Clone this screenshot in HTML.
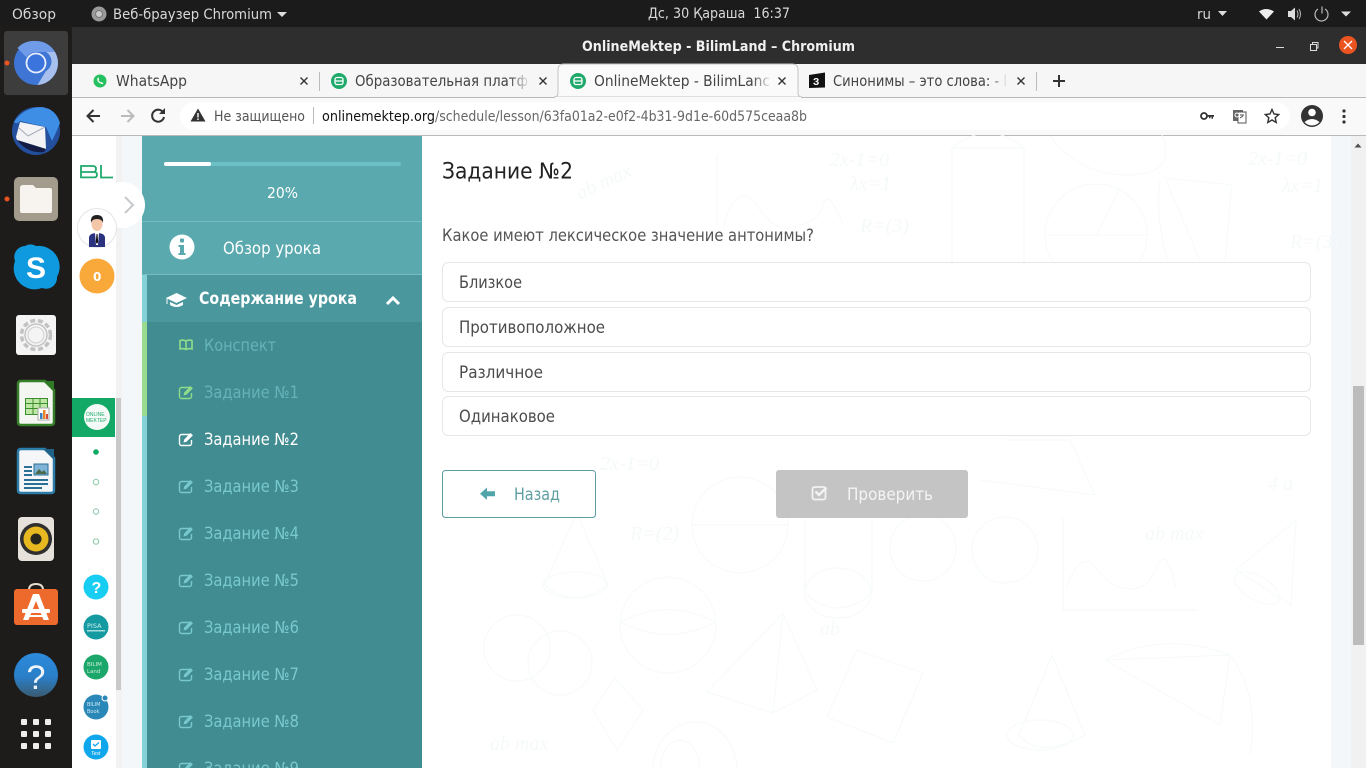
<!DOCTYPE html>
<html><head><meta charset="utf-8"><title>OnlineMektep - BilimLand</title>
<style>
html,body{margin:0;padding:0;width:1366px;height:768px;overflow:hidden;background:#fff}
svg{display:block}
text{white-space:pre}
.s{font-family:"DejaVu Sans","Liberation Sans",sans-serif}
.o{font-family:"DejaVu Sans","Liberation Sans",sans-serif}
</style></head><body>
<svg width="1366" height="768" viewBox="0 0 1366 768" xmlns="http://www.w3.org/2000/svg">
<defs>
<linearGradient id="fade"><stop offset="0" stop-color="#f6f6f6" stop-opacity="0"/><stop offset="1" stop-color="#f6f6f6"/></linearGradient>
<linearGradient id="fadew"><stop offset="0" stop-color="#fafafa" stop-opacity="0"/><stop offset="1" stop-color="#fafafa"/></linearGradient>
<linearGradient id="help" x1="0" y1="0" x2="0" y2="1"><stop offset="0" stop-color="#2c8bdc"/><stop offset=".55" stop-color="#2a7fc8"/><stop offset="1" stop-color="#3a5a70"/></linearGradient>
<g id="ed"><path d="M13 3.500H3.500A2 2 0 0 0 1.500 5.500v7a2 2 0 0 0 2 2h8a2 2 0 0 0 2-2V9" fill="none" stroke="currentColor" stroke-width="1.400"/><path d="M5.500 11.500l.7-3L12.500 2l2.400 2.400-6.400 6.400z" fill="currentColor"/></g>
</defs>

<!-- top bar -->
<rect width="1366" height="27" fill="#1b1b1b"/>
<text x="12" y="19" class="s" font-size="14.500" fill="#d8d8d8" textLength="44" lengthAdjust="spacingAndGlyphs">Обзор</text>
<circle cx="99" cy="14" r="7.500" fill="#9a9a9a"/><circle cx="99" cy="14" r="3.500" fill="#c9c9c9" stroke="#777"/>
<text x="113" y="19" class="s" font-size="14.500" fill="#d8d8d8" textLength="159" lengthAdjust="spacingAndGlyphs">Веб-браузер Chromium</text>
<path d="M277 12h10l-5 5z" fill="#ddd"/>
<text x="648" y="18" class="s" font-size="14.500" fill="#d8d8d8" textLength="142" lengthAdjust="spacingAndGlyphs">Дс, 30 Қараша  16:37</text>
<text x="1197" y="19" class="s" font-size="14.500" fill="#d8d8d8" textLength="14" lengthAdjust="spacingAndGlyphs">ru</text>
<path d="M1218 11h9l-4.500 5z" fill="#ddd"/>
<path d="M1259 11.500q7-5 15 0l-7.500 8z" fill="#eee"/>
<path d="M1288 11h3l4-3.500v13l-4-3.500h-3z" fill="#ddd"/><path d="M1297 10.500q2 3.500 0 7M1299 9q3 5 0 10" stroke="#bbb" fill="none"/>
<path d="M1318 9a6.500 6.500 0 1 0 7 0M1322 6.500v7" stroke="#bbb" fill="none" stroke-width="1.200"/>
<path d="M1341 11.500h10l-5 5z" fill="#ddd"/>

<!-- title bar -->
<rect y="27" width="1366" height="37" fill="#2f2e2e"/>
<text x="582" y="51" class="s" font-size="14.500" font-weight="700" fill="#f0f0f0" textLength="273" lengthAdjust="spacingAndGlyphs">OnlineMektep - BilimLand – Chromium</text>
<rect x="1276" y="47" width="8" height="1" fill="#ddd"/>
<rect x="1310.500" y="44.500" width="6" height="6" fill="none" stroke="#ddd"/><path d="M1312.500 44v-1.500h5.500v5.500h-1" fill="none" stroke="#ddd"/>
<circle cx="1348" cy="45" r="9" fill="#e95420"/><path d="M1344 41l8 8M1352 41l-8 8" stroke="#fff" stroke-width="1.300"/>

<!-- tab strip -->
<rect y="64" x="72" width="1294" height="34" fill="#f6f6f6"/>
<rect y="97" x="72" width="1294" height="1" fill="#b9b9b9"/>
<path d="M554 97q4 0 4-4V70q0-6 6-6H792q6 0 6 6v23q0 4 4 4z" fill="#fafafa" stroke="#c4c4c4"/>
<rect x="555" y="97" width="246" height="2" fill="#fafafa"/>
<circle cx="100" cy="81" r="6.500" fill="#25c05f"/><path d="M97.500 78q-1 3 2 5t4 .5l-1.500-1.500-1 .5q-2-1-2.500-2.500l.8-.8-1-1.800z" fill="#fff"/>
<text x="116" y="86" class="s" font-size="15" fill="#444" textLength="71" lengthAdjust="spacingAndGlyphs">WhatsApp</text>
<path d="M300.500 77.500l7 7M307.500 77.500l-7 7" stroke="#333" stroke-width="1.400"/>
<rect x="319" y="72" width="1" height="19" fill="#bbb"/>
<circle cx="339" cy="81" r="8" fill="#1faa6c"/><rect x="335" y="77.500" width="8" height="7" rx="2" fill="none" stroke="#fff" stroke-width="1.300"/><path d="M335 81h8" stroke="#fff" stroke-width="1.300"/>
<text x="355" y="86" class="s" font-size="15" fill="#444" textLength="173" lengthAdjust="spacingAndGlyphs">Образовательная платф</text>
<rect x="510" y="70" width="20" height="22" fill="url(#fade)"/>
<path d="M539.500 77.500l7 7M546.500 77.500l-7 7" stroke="#333" stroke-width="1.400"/>
<circle cx="578" cy="81" r="8" fill="#1faa6c"/><rect x="574" y="77.500" width="8" height="7" rx="2" fill="none" stroke="#fff" stroke-width="1.300"/><path d="M574 81h8" stroke="#fff" stroke-width="1.300"/>
<text x="594" y="86" class="s" font-size="15" fill="#444" textLength="176" lengthAdjust="spacingAndGlyphs">OnlineMektep - BilimLanc</text>
<rect x="752" y="70" width="20" height="22" fill="url(#fadew)"/>
<path d="M778.500 77.500l7 7M785.500 77.500l-7 7" stroke="#333" stroke-width="1.400"/>
<path d="M809 75l16-2.500v15l-16 .5z" fill="#111"/><text x="813" y="85" font-family="Liberation Sans,sans-serif" font-size="10" font-weight="700" fill="#fff">З</text>
<text x="833" y="86" class="s" font-size="15" fill="#444" textLength="174" lengthAdjust="spacingAndGlyphs">Синонимы – это слова: - l</text>
<rect x="990" y="70" width="18" height="22" fill="url(#fade)"/>
<path d="M1017.500 77.500l7 7M1024.500 77.500l-7 7" stroke="#333" stroke-width="1.400"/>
<rect x="1036" y="72" width="1" height="19" fill="#bbb"/>
<path d="M1059 75v12M1053 81h12" stroke="#333" stroke-width="2"/>

<!-- toolbar -->
<rect y="98" x="72" width="1294" height="37" fill="#f9f9f9"/>
<rect y="135" x="72" width="1294" height="1" fill="#b9b9b9"/>
<rect x="180" y="102" width="1110" height="28" rx="14" fill="#fff"/>
<path d="M100 116H88M93.500 110l-6 6 6 6" fill="none" stroke="#333" stroke-width="2"/>
<path d="M133 116h-12M127.500 110l6 6-6 6" fill="none" stroke="#bbb" stroke-width="2"/>
<path d="M163.500 113a6 6 0 1 0 .5 4" fill="none" stroke="#333" stroke-width="2"/><path d="M165 108v6h-6z" fill="#333"/>
<path d="M198 108.500l7.500 13h-15z" fill="#333"/><rect x="197.300" y="113" width="1.400" height="4.500" fill="#fff"/><rect x="197.300" y="118.500" width="1.400" height="1.500" fill="#fff"/>
<text x="214" y="121" class="s" font-size="14" fill="#555" textLength="91" lengthAdjust="spacingAndGlyphs">Не защищено</text>
<rect x="313" y="107" width="1" height="17" fill="#bbb"/>
<text x="322" y="121" class="s" font-size="14" fill="#111" textLength="113" lengthAdjust="spacingAndGlyphs">onlinemektep.org</text>
<text x="435" y="121" class="s" font-size="14" fill="#666" textLength="372" lengthAdjust="spacingAndGlyphs">/schedule/lesson/63fa01a2-e0f2-4b31-9d1e-60d575ceaa8b</text>
<circle cx="1204" cy="116" r="3" fill="none" stroke="#333" stroke-width="1.800"/><path d="M1207 115h7v1.800h-1v2h-1.500v-2h-1v1.500h-1.500v-1.500h-2z" fill="#333"/>
<rect x="1233" y="110" width="10" height="11" fill="#666"/><rect x="1238" y="112" width="8" height="11" fill="#fff" stroke="#555"/><path d="M1240 115h4M1240 118l3-2" stroke="#444"/><circle cx="1237" cy="115" r="2" fill="none" stroke="#fff"/>
<path d="M1272 109.500l2 4.500 4.700.5-3.500 3.200 1 4.800-4.200-2.500-4.200 2.500 1-4.800-3.500-3.200 4.700-.5z" fill="none" stroke="#333" stroke-width="1.400"/>
<circle cx="1312" cy="116" r="11" fill="#333"/><circle cx="1312" cy="112.500" r="3.800" fill="#fff"/><path d="M1304.500 122q7.500-6 15 0q-3 3.500-7.500 3.500t-7.500-3.500z" fill="#fff"/>
<circle cx="1344" cy="111" r="1.600" fill="#333"/><circle cx="1344" cy="116.500" r="1.600" fill="#333"/><circle cx="1344" cy="122" r="1.600" fill="#333"/>

<!-- page backgrounds -->
<rect x="72" y="136" width="1294" height="632" fill="#fff"/>
<rect x="122" y="136" width="20" height="632" fill="#f3f7fa"/>
<rect x="1331" y="136" width="20" height="632" fill="#f3f7fa"/>

<!-- faint pattern -->
<g fill="none" stroke="#f6fafa" stroke-width="1">
<circle cx="668" cy="625" r="48"/><path d="M621 622q47 25 94 0q-47-25-94 0z"/>
<circle cx="740" cy="525" r="48"/><path d="M692 525h96"/>
<circle cx="517" cy="648" r="33"/><circle cx="560" cy="663" r="32"/>
<path d="M577 513l-33 72q31 25 64 0z"/><ellipse cx="575" cy="585" rx="32" ry="13"/>
<path d="M805 520v73q33 30 67 0V520"/><ellipse cx="838" cy="593" rx="33" ry="25"/>
<circle cx="923" cy="548" r="33"/>
<path d="M615 678l28 32-26 40-24-40z"/>
<path d="M707 692l66 21 44-23-34-77-76 79zM773 713l10-100"/>
<path d="M827 717l30-67 66 23-30 70z"/>
<ellipse cx="695" cy="770" rx="42" ry="48"/><ellipse cx="680" cy="770" rx="20" ry="30"/>
<circle cx="1096" cy="235" r="51"/><path d="M1046 235h102M1096 235l24-48"/>
<path d="M1165 178l67 7-7 75M1165 178l35 82M1160 180q-5 40 8 82"/>
<path d="M1050 136q30 40 80 39t30-45"/>
<path d="M952 148h72v115h-72zM952 148q36-30 72 0"/>
<path d="M717 155v70M723 227q15-50 35-20t40 18q20-2 25-20t20 20"/>
<path d="M1005 440h65l25 55-115-15"/>
<circle cx="1005" cy="550" r="33"/><path d="M1063 518v92h134"/>
<path d="M1066 588q15-40 30-20t30 20q20 5 30-20t20 20"/>
<path d="M1052 655l-33 80q20 25 66 0z"/><ellipse cx="1040" cy="735" rx="33" ry="15"/>
<path d="M1105 660l125-5-10 70zM1105 660l115 65M1105 660q60-30 125-5q30 40 20 100"/>
<path d="M1296 520l-60 50 55 35z"/><ellipse cx="1257" cy="588" rx="25" ry="12" transform="rotate(30 1257 588)"/>
</g>
<g fill="#f5f9f9" font-family="Liberation Serif,serif" font-style="italic" font-size="20">
<text x="1248" y="165">2x-1=0</text><text x="1282" y="192">λx=1</text><text x="1290" y="248">R=(3)</text>
<text x="830" y="166">2x-1=0</text><text x="850" y="190">λx=1</text><text x="860" y="232">R=(3)</text>
<text x="600" y="470">2x-1=0</text><text x="630" y="540">R=(2)</text><text x="490" y="750">ab max</text><text x="1145" y="540">ab max</text><text x="1268" y="490">4 a</text>
<text x="820" y="635">ab</text><text x="580" y="200" transform="rotate(-25 580 200)">ab max</text>
</g>

<!-- right scrollbar -->
<rect x="1351" y="136" width="15" height="632" fill="#f1f1f1"/>
<path d="M1354.500 147.500l3.500-4 3.500 4z" fill="#505050"/>
<rect x="1353" y="386" width="11" height="259" fill="#bcbcbc"/>

<!-- sidebar -->
<rect x="142" y="136" width="280" height="139" fill="#59a9af"/>
<rect x="142" y="275" width="280" height="47" fill="#4a989e"/>
<rect x="142" y="322" width="280" height="446" fill="#408c91"/>
<rect x="142" y="275" width="5" height="493" fill="#84d1d8"/>
<rect x="142" y="322" width="5" height="94" fill="#9bdb8f"/>
<rect x="142" y="221" width="280" height="1" fill="#76bdc2"/>
<rect x="142" y="274" width="280" height="1" fill="#76bdc2"/>
<rect x="164" y="162" width="237" height="4" rx="2" fill="#6cc0c5"/>
<rect x="164" y="162" width="47" height="4" rx="2" fill="#fff"/>
<text x="267" y="198" class="o" font-size="15" fill="#fff" textLength="31" lengthAdjust="spacingAndGlyphs">20%</text>
<circle cx="182" cy="247" r="12.500" fill="#fff"/><rect x="180" y="238.500" width="4" height="4" rx="1" fill="#59a9af"/><path d="M178.500 245h5.500v8h1.500v2h-7v-2h1.500v-6h-1.500z" fill="#59a9af"/>
<text x="223" y="254" class="o" font-size="16.500" fill="#fff" textLength="98" lengthAdjust="spacingAndGlyphs">Обзор урока</text>
<path d="M166 298l10.500-5 10.500 5-10.500 5z" fill="#fff"/><path d="M170 302v3q6.500 4 13 0v-3l-6.500 3z" fill="#fff"/><path d="M167 298v6" stroke="#fff"/>
<text x="199" y="304" class="o" font-size="16.500" font-weight="700" fill="#fff" textLength="158" lengthAdjust="spacingAndGlyphs">Содержание урока</text>
<path d="M387 304l6-6 6 6" fill="none" stroke="#fff" stroke-width="3"/>
<g fill="none" stroke="#8fdc8a" stroke-width="1.600"><path d="M186 341q-3-1.500-6-.5v8.500q3-1 6 .5q3-1.500 6-.5v-8.500q-3-1-6 .5zM186 341v9"/></g>
<text x="204" y="351" class="o" font-size="16.500" fill="#63b3b8" textLength="72" lengthAdjust="spacingAndGlyphs">Конспект</text>

<use href="#ed" x="178" y="384" color="#8fdc8a"/>
<use href="#ed" x="178" y="431" color="#ffffff"/>
<use href="#ed" x="178" y="478" color="#78c9cd"/>
<use href="#ed" x="178" y="525" color="#78c9cd"/>
<use href="#ed" x="178" y="572" color="#78c9cd"/>
<use href="#ed" x="178" y="619" color="#78c9cd"/>
<use href="#ed" x="178" y="666" color="#78c9cd"/>
<use href="#ed" x="178" y="713" color="#78c9cd"/>
<use href="#ed" x="178" y="760" color="#78c9cd"/>
<g font-size="16.500" fill="#63b3b8" style="font-family:'DejaVu Sans',sans-serif">
<text x="204" y="398" textLength="95" lengthAdjust="spacingAndGlyphs">Задание №1</text>
<text x="204" y="445" textLength="95" lengthAdjust="spacingAndGlyphs" fill="#fff">Задание №2</text>
<text x="204" y="492" textLength="95" lengthAdjust="spacingAndGlyphs" fill="#78c9cd">Задание №3</text>
<text x="204" y="539" textLength="95" lengthAdjust="spacingAndGlyphs" fill="#78c9cd">Задание №4</text>
<text x="204" y="586" textLength="95" lengthAdjust="spacingAndGlyphs" fill="#78c9cd">Задание №5</text>
<text x="204" y="633" textLength="95" lengthAdjust="spacingAndGlyphs" fill="#78c9cd">Задание №6</text>
<text x="204" y="680" textLength="95" lengthAdjust="spacingAndGlyphs" fill="#78c9cd">Задание №7</text>
<text x="204" y="727" textLength="95" lengthAdjust="spacingAndGlyphs" fill="#78c9cd">Задание №8</text>
<text x="204" y="774" textLength="95" lengthAdjust="spacingAndGlyphs" fill="#78c9cd">Задание №9</text>
</g>

<!-- left panel -->
<rect x="116" y="136" width="6" height="632" fill="#f2f2f2"/>
<rect x="116" y="398" width="5" height="292" fill="#c9c9c9"/>
<circle cx="122" cy="205" r="23" fill="#fff"/>
<path d="M125 197l8 8-8 8" fill="none" stroke="#c3c8cc" stroke-width="2"/>
<g fill="none" stroke="#1faa6c" stroke-width="1.800"><path d="M81 166h12q3 0 3 3t-3 3H81zM81 172h13q3 0 3 2.700t-3 2.700H81z"/><path d="M101 165v12.500h12"/></g>
<circle cx="97" cy="228" r="19.500" fill="#fff" stroke="#e3e5e8"/>
<path d="M89 247v-9q0-5 8-5t8 5v9z" fill="#2b3280"/><path d="M95 233h4l-1 12h-2z" fill="#fff"/><path d="M96.500 234h1l.7 8-1.200 2-1.200-2z" fill="#111"/>
<ellipse cx="97" cy="224" rx="5.500" ry="7" fill="#f3c6a8"/><path d="M91 223q-1-8 6-8t6 8q-1-4-6-4t-6 4z" fill="#222"/>
<circle cx="97" cy="276" r="17.500" fill="#f9a93a"/>
<text x="93" y="281" class="o" font-size="12" font-weight="700" fill="#fff">0</text>
<rect x="72" y="398" width="43" height="39" fill="#12a866"/>
<circle cx="97" cy="417" r="13" fill="#f4fbf7"/>
<text x="86" y="416" font-family="Liberation Sans,sans-serif" font-size="5" fill="#1faa6c">ONLINE</text><text x="86" y="422" font-family="Liberation Sans,sans-serif" font-size="5" fill="#1faa6c">MEKTEP</text>
<circle cx="96" cy="452" r="2.800" fill="#12a866"/>
<circle cx="96" cy="482" r="2.700" fill="#fff" stroke="#8cc8a8"/><circle cx="96" cy="511.500" r="2.700" fill="#fff" stroke="#8cc8a8"/><circle cx="96" cy="541.500" r="2.700" fill="#fff" stroke="#8cc8a8"/>
<circle cx="96" cy="587" r="12.500" fill="#18cdf2"/><text x="91.500" y="593" font-family="Liberation Sans,sans-serif" font-weight="700" font-size="16" fill="#fff">?</text>
<circle cx="96" cy="627" r="12.500" fill="#159aa2"/><text x="87" y="628" font-family="DejaVu Sans,sans-serif" font-size="6.500" fill="#cdeeee">PISA</text><rect x="87" y="630" width="18" height="1.500" fill="#a9dcdc"/>
<circle cx="96" cy="667" r="12.500" fill="#1ba66a"/><text x="87" y="666" font-family="DejaVu Sans,sans-serif" font-size="5.500" fill="#cdeedd">BILIM</text><text x="87" y="673" font-family="DejaVu Sans,sans-serif" font-size="5.500" fill="#cdeedd">Land</text>
<circle cx="96" cy="707" r="12.500" fill="#2a88b8"/><text x="87" y="706" font-family="DejaVu Sans,sans-serif" font-size="5" fill="#cde6f2">BILIM</text><text x="87" y="713" font-family="DejaVu Sans,sans-serif" font-size="5" fill="#cde6f2">Book</text><circle cx="105" cy="698" r="3" fill="#2a88b8" stroke="#fff"/>
<circle cx="96" cy="747" r="12.500" fill="#10a6ec"/><rect x="91" y="740" width="10" height="9" rx="1" fill="#fff"/><path d="M93 744l2 2 4-3.500" fill="none" stroke="#10a6ec" stroke-width="1.300"/><text x="91" y="755" font-family="Liberation Sans,sans-serif" font-size="5" font-style="italic" fill="#fff">Test</text>

<!-- main content -->
<text x="442" y="178.500" class="o" font-size="22" fill="#222" textLength="131" lengthAdjust="spacingAndGlyphs">Задание №2</text>
<text x="442" y="241" class="o" font-size="16.500" fill="#555" textLength="372" lengthAdjust="spacingAndGlyphs">Какое имеют лексическое значение антонимы?</text>
<g fill="#fff" stroke="#e4e6e8">
<rect x="442.500" y="262.500" width="868" height="39" rx="6"/>
<rect x="442.500" y="307.500" width="868" height="39" rx="6"/>
<rect x="442.500" y="352.500" width="868" height="39" rx="6"/>
<rect x="442.500" y="396.500" width="868" height="39" rx="6"/>
</g>
<g font-size="16.500" fill="#4c4c4c" style="font-family:'DejaVu Sans',sans-serif">
<text x="459" y="288" textLength="63" lengthAdjust="spacingAndGlyphs">Близкое</text>
<text x="459" y="333" textLength="146" lengthAdjust="spacingAndGlyphs">Противоположное</text>
<text x="459" y="378" textLength="84" lengthAdjust="spacingAndGlyphs">Различное</text>
<text x="459" y="422" textLength="96" lengthAdjust="spacingAndGlyphs">Одинаковое</text>
</g>
<rect x="442.500" y="470.500" width="153" height="47" rx="3" fill="#fff" stroke="#5b9ea3"/>
<path d="M487 487.500l-7 6.200 7 6.200v-3.700h8v-5h-8z" fill="#4fa5aa"/>
<text x="514" y="500" class="o" font-size="16.500" fill="#5f9ea3" textLength="46" lengthAdjust="spacingAndGlyphs">Назад</text>
<rect x="776" y="470" width="192" height="48" rx="3" fill="#c4c4c4"/>
<rect x="812.500" y="487" width="13" height="12.500" rx="2" fill="none" stroke="#f2f2f2" stroke-width="1.800"/>
<path d="M815.500 491.500l3.500 3.500 7.500-7.500" fill="none" stroke="#f2f2f2" stroke-width="2.400"/>
<text x="847" y="500" class="o" font-size="16.500" fill="#f4f4f4" textLength="86" lengthAdjust="spacingAndGlyphs">Проверить</text>

<!-- dock -->
<rect x="0" y="27" width="72" height="741" fill="#1d1c1b"/>
<rect x="4" y="31" width="64" height="64" rx="3" fill="#3d3d3d"/>
<circle cx="7" cy="63" r="2.500" fill="#e95420"/>
<circle cx="36" cy="63" r="22" fill="#3f76d6"/>
<path d="M36 41a22 22 0 0 1 19 11H36a11 11 0 0 0-9.500 5.500L17.500 48A22 22 0 0 1 36 41z" fill="#6f9be8"/>
<path d="M55 52a22 22 0 0 1-17.500 33L46 71a11 11 0 0 0 0-19z" fill="#a7c0ee"/>
<circle cx="36" cy="63" r="9.500" fill="#3b74dc" stroke="#e8eefb" stroke-width="1.800"/>
<!-- thunderbird -->
<circle cx="36" cy="131" r="24" fill="#234f9c"/>
<path d="M14 122q10-15 28-15 14 2 18 16-4 10-8 18l-6-14-26-6q-3 4-6 1z" fill="#3f8ee6"/>
<path d="M20 122l25 5 1 22-29-9-1-3z" fill="#f3f3f6"/>
<path d="M19 128l9 8 17-9" fill="none" stroke="#a5abb9" stroke-width="1"/>
<path d="M17 140l29 9-2 3q-16 2-27-12z" fill="#141c44"/>
<!-- files -->
<rect x="14" y="177" width="44" height="44" rx="5" fill="#a39c8d"/>
<path d="M20 188q0-3 3-3h10l3 3h14q2 0 2 2v21q0 2-2 2H22q-2 0-2-2z" fill="#f7f3ee"/>
<circle cx="7" cy="199" r="2.500" fill="#e95420"/>
<!-- skype -->
<path d="M25 246a11 11 0 0 0-10 15 21 21 0 0 0 27 27 11 11 0 0 0 15-11 21 21 0 0 0-21-31 11 11 0 0 0-11 0z" fill="#0f99de"/>
<text x="36" y="278" text-anchor="middle" font-family="Liberation Sans,sans-serif" font-size="30" font-weight="700" fill="#fff">S</text>
<!-- settings -->
<rect x="16" y="315" width="40" height="40" rx="3" fill="#f4f4f4"/>
<circle cx="36" cy="335" r="14.500" fill="none" stroke="#c2c2c2" stroke-width="3.500" stroke-dasharray="5 2.800"/>
<circle cx="36" cy="335" r="11" fill="#f4f4f4" stroke="#bdbdbd" stroke-width="1.300"/>
<circle cx="36" cy="335" r="8" fill="none" stroke="#d0d0d0"/>
<!-- calc -->
<path d="M21 381h24l9 9v32q0 3-3 3H21q-3 0-3-3v-38q0-3 3-3z" fill="#f4f6f2" stroke="#357f29" stroke-width="2.500"/>
<path d="M43 381l11 11v-11z" fill="#2f7a24"/>
<g stroke="#3c8d2f" fill="#bfe8a6"><rect x="25.500" y="398.500" width="22" height="16"/><path d="M25.500 403.500h22M25.500 408.500h22M33 398.500v16M40 398.500v16" fill="none"/></g>
<rect x="38" y="408" width="11" height="12" fill="#fff" stroke="#aaa"/><rect x="40" y="413" width="2.500" height="6" fill="#3a7fc0"/><rect x="43" y="410" width="2.500" height="9" fill="#e8872a"/><rect x="46" y="414" width="2" height="5" fill="#d24a3a"/>
<!-- writer -->
<path d="M21 449h24l9 9v32q0 3-3 3H21q-3 0-3-3v-38q0-3 3-3z" fill="#f4f6f8" stroke="#2b7ca8" stroke-width="2.500"/>
<path d="M43 449l11 11v-11z" fill="#1e6288"/>
<g stroke="#2b6f94" stroke-width="2"><path d="M24 467h8M24 471h8M24 475h8M24 480h24M24 484h24M24 488h18"/></g>
<rect x="34" y="464" width="14" height="11" fill="#7fb4d8" stroke="#2b6f94"/><path d="M35 474l4-5 3 3 2-2 3 4z" fill="#4b6a4a"/>
<!-- rhythmbox -->
<rect x="18" y="517" width="36" height="44" rx="4" fill="#e6e2db"/>
<circle cx="36" cy="539" r="16" fill="#2f2f2f"/><circle cx="36" cy="539" r="12.500" fill="#e8b820"/><circle cx="36" cy="539" r="5.500" fill="#26261d"/>
<!-- software -->
<path d="M29 590q0-6 7-6t7 6" fill="none" stroke="#e7dcd0" stroke-width="2"/>
<rect x="14" y="589" width="44" height="36" rx="3" fill="#ee6a2c"/>
<path d="M33 594h6l10 26h-5.500L36 601l-7.500 19H23z" fill="#fff"/>
<rect x="22" y="609" width="28" height="4" rx="1" fill="#fff"/>
<rect x="25" y="615" width="22" height="2" fill="#fff"/>
<!-- help -->
<circle cx="36" cy="675" r="22" fill="url(#help)"/>
<text x="36" y="689" text-anchor="middle" font-family="Liberation Sans,sans-serif" font-size="34" fill="#eef4fa">?</text>
<!-- grid -->
<g fill="#eee"><rect x="21" y="719" width="6" height="6" rx="1"/><rect x="33" y="719" width="6" height="6" rx="1"/><rect x="45" y="719" width="6" height="6" rx="1"/><rect x="21" y="731" width="6" height="6" rx="1"/><rect x="33" y="731" width="6" height="6" rx="1"/><rect x="45" y="731" width="6" height="6" rx="1"/><rect x="21" y="743" width="6" height="6" rx="1"/><rect x="33" y="743" width="6" height="6" rx="1"/><rect x="45" y="743" width="6" height="6" rx="1"/></g>
</svg>
</body></html>
